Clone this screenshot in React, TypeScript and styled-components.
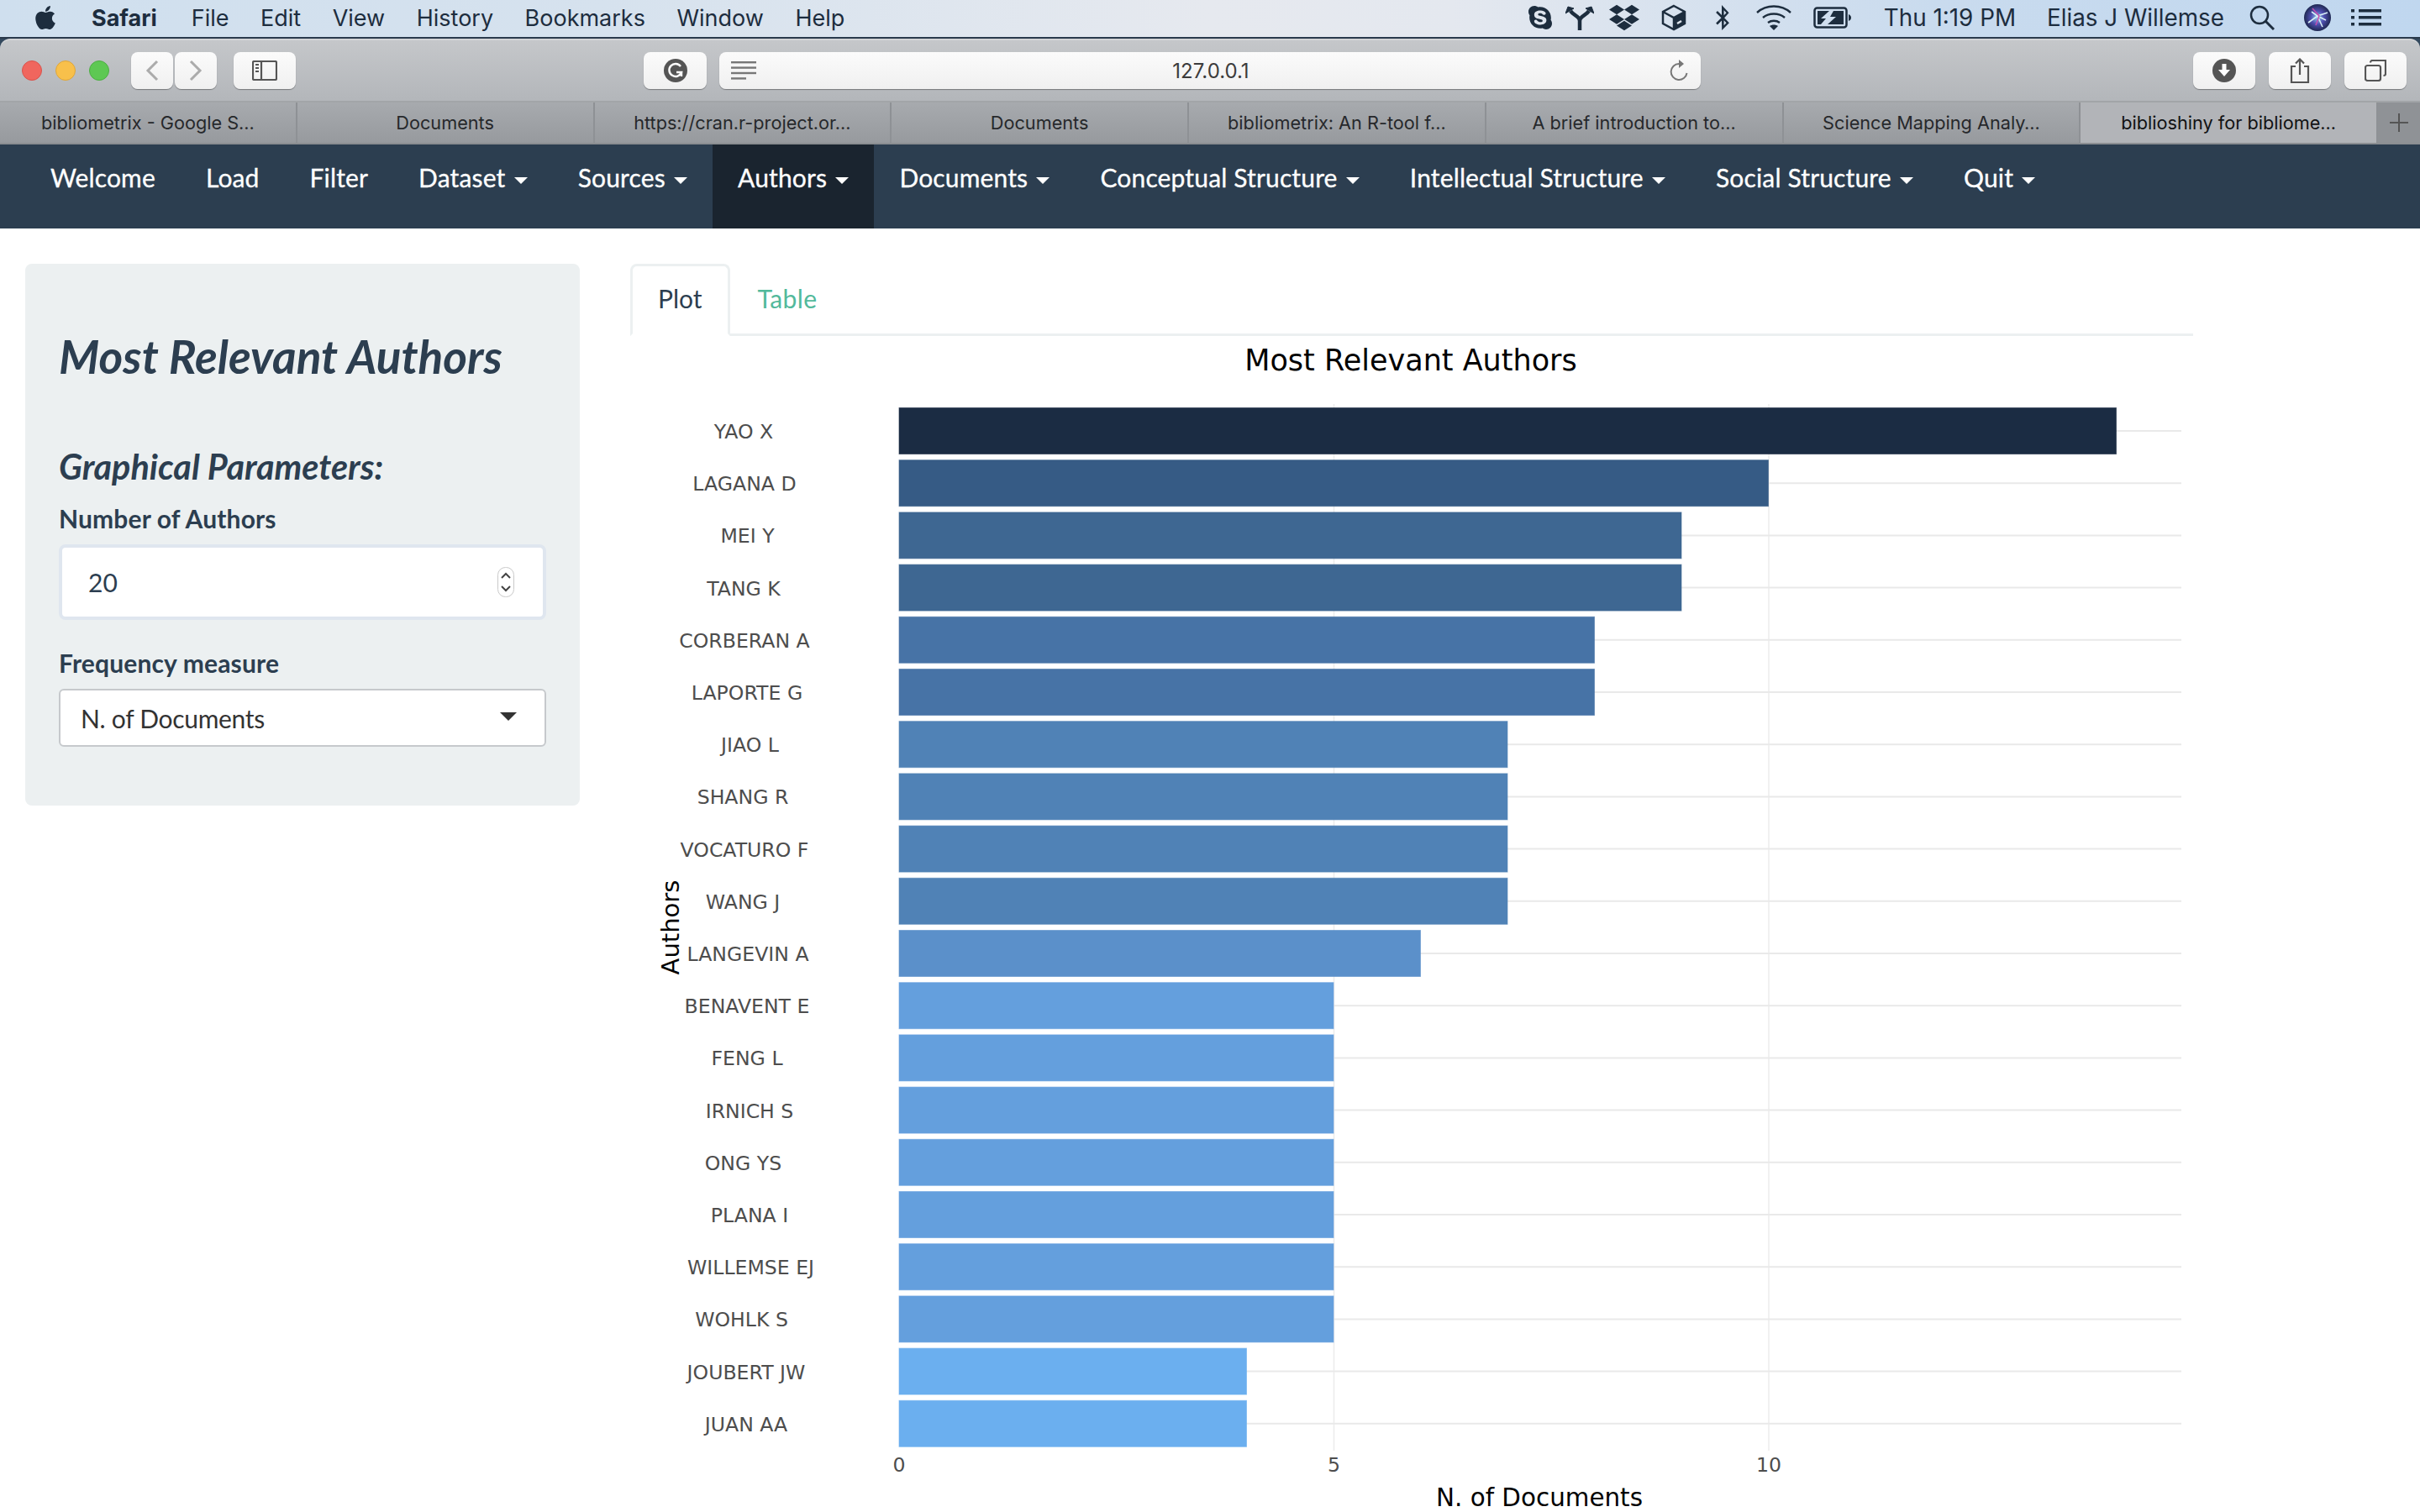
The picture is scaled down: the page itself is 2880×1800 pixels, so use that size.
import React from 'react';
import styled, { createGlobalStyle } from 'styled-components';
import { FaApple, FaSkype, FaDropbox, FaBluetoothB } from 'react-icons/fa';

const GlobalStyle = createGlobalStyle`
  html, body {
    margin: 0;
    padding: 0;
    width: 2880px;
    height: 1800px;
    overflow: hidden;
    background: #ffffff;
  }
  * { box-sizing: border-box; }
`;

const Screen = styled.div`
  width: 2880px;
  height: 1800px;
  overflow: hidden;
  background: #34495e;
  display: flex;
  flex-direction: column;
`;

/* mac menu bar */
const MenuBar = styled.div`
  height: 46px;
  flex: none;
  display: flex;
  align-items: center;
  padding: 0 46px 2px 38px;
  border-bottom: 2px solid #2a3a4c;
  background: linear-gradient(90deg, #cfdfee 0%, #d6e2ee 25%, #e6e9ef 50%, #e4e8ef 60%, #c9dbee 80%, #c0d7ef 100%);
  font-family: Inter, "Liberation Sans", sans-serif;
  font-size: 27px;
  color: #1d2d3e;
`;

const MenuGroup = styled.div<{ $right?: boolean }>`
  display: flex;
  align-items: center;
  margin-left: ${(p) => (p.$right ? 'auto' : '0')};
`;

const MenuItem = styled.span<{ $bold?: boolean; $gap?: number }>`
  font-weight: ${(p) => (p.$bold ? 700 : 400)};
  margin-left: ${(p) => p.$gap ?? 37.5}px;
  white-space: nowrap;
`;

const StatusText = styled(MenuItem)`
  font-size: 27.8px;
`;

const StatusIcon = styled.span<{ $gap: number; $w: number }>`
  display: flex;
  align-items: center;
  justify-content: center;
  width: ${(p) => p.$w}px;
  margin-left: ${(p) => p.$gap}px;
  color: #1d2d3e;
`;

/* safari chrome */
const Toolbar = styled.div`
  height: 76px;
  flex: none;
  display: flex;
  align-items: center;
  padding: 0 16px 0 26px;
  border-radius: 12px 12px 0 0;
  border-top: 2px solid #d3d4d6;
  border-bottom: 2px solid #a2a5a8;
  background: linear-gradient(180deg, #c5c7ca 0%, #b3b6ba 100%);
`;

const TrafficLight = styled.span<{ $color: string; $edge: string }>`
  width: 24px;
  height: 24px;
  border-radius: 50%;
  margin-right: 16px;
  background: ${(p) => p.$color};
  border: 1px solid ${(p) => p.$edge};
`;

const ChromeButton = styled.div<{ $w: number; $gap?: number }>`
  width: ${(p) => p.$w}px;
  height: 44px;
  margin-left: ${(p) => p.$gap ?? 0}px;
  display: flex;
  align-items: center;
  justify-content: center;
  border-radius: 8px;
  background: linear-gradient(180deg, #fbfbfb 0%, #f0f0f0 100%);
  box-shadow: 0 1px 1px rgba(0, 0, 0, 0.35);
`;

const UrlBar = styled.div`
  width: 1168px;
  height: 44px;
  margin-left: 15px;
  display: flex;
  align-items: center;
  justify-content: space-between;
  padding: 0 15px 0 14px;
  border-radius: 8px;
  background: linear-gradient(180deg, #fbfbfb 0%, #f0f0f0 100%);
  box-shadow: 0 1px 1px rgba(0, 0, 0, 0.35);
  font-family: Inter, "Liberation Sans", sans-serif;
  font-size: 24px;
  color: #3c3c3c;
`;

const UrlText = styled.span`
  margin-right: 5px;
`;

const RightTools = styled.div`
  display: flex;
  margin-left: auto;
`;

const TabBar = styled.div`
  height: 50px;
  flex: none;
  display: flex;
  border-bottom: 2px solid #8b8e92;
  font-family: Inter, "Liberation Sans", sans-serif;
  font-size: 21.7px;
  color: #26282b;
  background: linear-gradient(180deg, #a7aaae 0%, #979a9e 100%);
`;

const BrowserTab = styled.div<{ $active?: boolean }>`
  flex: 1;
  display: flex;
  align-items: center;
  justify-content: center;
  white-space: nowrap;
  border-right: 2px solid #8e9195;
  background: ${(p) => (p.$active ? '#b2b4b8' : 'transparent')};
  color: ${(p) => (p.$active ? '#111213' : '#26282b')};
`;

const NewTab = styled.div`
  width: 50px;
  flex: none;
  display: flex;
  align-items: center;
  justify-content: center;
  background: #8f9296;
`;

/* shiny navbar */
const NavBar = styled.nav`
  height: 100px;
  flex: none;
  display: flex;
  background: #2c3e50;
  padding-left: 30px;
  font-family: Lato, "Open Sans", sans-serif;
  font-size: 30px;
  letter-spacing: 0.15px;
`;

const NavLink = styled.a<{ $active?: boolean }>`
  display: block;
  height: 100px;
  padding: 18px 30px 0;
  line-height: 43px;
  white-space: nowrap;
  color: #ffffff;
  -webkit-text-stroke: 0.3px #ffffff;
  background: ${(p) => (p.$active ? '#1a242f' : 'transparent')};
`;

const Caret = styled.span`
  display: inline-block;
  width: 0;
  height: 0;
  margin-left: 10.25px;
  vertical-align: middle;
  border-top: 8px solid #ffffff;
  border-left: 8px solid transparent;
  border-right: 8px solid transparent;
`;

/* page body */
const Page = styled.div`
  flex: 1;
  display: flex;
  align-items: flex-start;
  padding: 42px 0 0 30px;
  background: #ffffff;
  font-family: Lato, "Open Sans", sans-serif;
  color: #2c3e50;
`;

const SidePanel = styled.aside`
  width: 660px;
  flex: none;
  padding: 80px 40px 70px;
  border-radius: 8px;
  background: #ecf0f1;
`;

const PanelTitle = styled.h2`
  margin: 0 0 77px;
  font-size: 55px;
  line-height: 60px;
  font-style: italic;
  font-weight: 700;
`;

const PanelSubtitle = styled.h3`
  margin: 0 0 18px;
  font-size: 41.4px;
  line-height: 48px;
  font-style: italic;
  font-weight: 700;
`;

const FieldLabel = styled.label<{ $top?: number }>`
  display: block;
  margin: ${(p) => p.$top ?? 0}px 0 11px;
  font-size: 30px;
  line-height: 40px;
  font-weight: 700;
  letter-spacing: 0.15px;
`;

const NumberField = styled.div`
  height: 90px;
  display: flex;
  align-items: center;
  justify-content: space-between;
  padding: 0 34px 0 31px;
  border: 4px solid #dfe6ef;
  border-radius: 8px;
  background: #ffffff;
  font-size: 30px;
`;

const SelectField = styled.div`
  height: 69px;
  display: flex;
  align-items: center;
  justify-content: space-between;
  padding: 0 33px 0 24px;
  border: 2px solid #c6c9cc;
  border-radius: 6px;
  background: #ffffff;
  font-size: 30px;
  letter-spacing: -0.3px;
  color: #333333;
`;

const SelectArrow = styled.span`
  width: 0;
  height: 0;
  margin-bottom: 3px;
  border-top: 10px solid #333333;
  border-left: 10px solid transparent;
  border-right: 10px solid transparent;
`;

const Main = styled.main`
  width: 1860px;
  margin-left: 60px;
`;

const TabStrip = styled.div`
  height: 86px;
  display: flex;
  font-size: 30px;
  border-bottom: 3px solid #ecf0f1;
`;

const PageTab = styled.div<{ $active?: boolean }>`
  height: ${(p) => (p.$active ? 86 : 83)}px;
  padding: ${(p) => (p.$active ? '0 30px 4px' : '0 33px 1px')};
  display: flex;
  align-items: center;
  border: ${(p) => (p.$active ? '3px solid #ecf0f1' : '0')};
  border-bottom: ${(p) => (p.$active ? '3px solid #ffffff' : '0')};
  border-radius: 8px 8px 0 0;
  background: ${(p) => (p.$active ? '#ffffff' : 'transparent')};
  letter-spacing: ${(p) => (p.$active ? '0' : '0.4px')};
  color: ${(p) => (p.$active ? '#2c3e50' : '#52b99b')};
`;

const ChartFrame = styled.svg`
  display: block;
  width: 1860px;
  height: 1400px;
  font-family: "DejaVu Sans", Verdana, sans-serif;
`;

const menuItems = ['File', 'Edit', 'View', 'History', 'Bookmarks', 'Window', 'Help'];

const tabs = [
  'bibliometrix - Google S…',
  'Documents',
  'https://cran.r-project.or…',
  'Documents',
  'bibliometrix: An R-tool f…',
  'A brief introduction to…',
  'Science Mapping Analy…',
  'biblioshiny for bibliome…',
];

const navItems: { label: string; menu?: boolean; active?: boolean }[] = [
  { label: 'Welcome' },
  { label: 'Load' },
  { label: 'Filter' },
  { label: 'Dataset', menu: true },
  { label: 'Sources', menu: true },
  { label: 'Authors', menu: true, active: true },
  { label: 'Documents', menu: true },
  { label: 'Conceptual Structure', menu: true },
  { label: 'Intellectual Structure', menu: true },
  { label: 'Social Structure', menu: true },
  { label: 'Quit', menu: true },
];

// name, documents, centre of the label (the labels are not aligned in the plot)
const authors: [string, number, number][] = [
  ['YAO X', 14, 885],
  ['LAGANA D', 10, 886],
  ['MEI Y', 9, 889.5],
  ['TANG K', 9, 885],
  ['CORBERAN A', 8, 886],
  ['LAPORTE G', 8, 889],
  ['JIAO L', 7, 892.5],
  ['SHANG R', 7, 884],
  ['VOCATURO F', 7, 886],
  ['WANG J', 7, 884],
  ['LANGEVIN A', 6, 890],
  ['BENAVENT E', 5, 889],
  ['FENG L', 5, 889],
  ['IRNICH S', 5, 892],
  ['ONG YS', 5, 884.5],
  ['PLANA I', 5, 892],
  ['WILLEMSE EJ', 5, 893.5],
  ['WOHLK S', 5, 882.5],
  ['JOUBERT JW', 4, 888],
  ['JUAN AA', 4, 888],
];

const barColors: Record<number, string> = {
  14: '#1b2c43',
  10: '#365b85',
  9: '#3e6792',
  8: '#4773a6',
  7: '#5082b6',
  6: '#5b90ca',
  5: '#649fdd',
  4: '#6bafef',
};

const X0 = 1070;
const UNIT = 103.5;
const ROW0 = 513;
const PITCH = 62.2;

function Chart() {
  return (
    <ChartFrame viewBox="750 400 1860 1400">
      <text x={1679} y={441} fontSize={35} textAnchor="middle" fill="#000">
        Most Relevant Authors
      </text>
      {[5, 10].map((v) => (
        <line key={v} x1={X0 + v * UNIT} x2={X0 + v * UNIT} y1={481} y2={1727} stroke="#ececec" strokeWidth={1.5} />
      ))}
      {authors.map(([name], i) => (
        <line key={name} x1={X0} x2={2596} y1={ROW0 + i * PITCH} y2={ROW0 + i * PITCH} stroke="#e9e9e9" strokeWidth={2} />
      ))}
      {authors.map(([name, n, cx], i) => {
        const y = ROW0 + i * PITCH;
        return (
          <g key={name}>
            <rect
              x={X0}
              y={y - 27.5}
              width={n * UNIT - 0.5}
              height={55}
              fill={barColors[n]}
              stroke={barColors[n]}
              strokeOpacity={0.6}
            />
            <text x={cx} y={y + 9} fontSize={23.6} textAnchor="middle" fill="#4d4d4d">
              {name}
            </text>
          </g>
        );
      })}
      {[0, 5, 10].map((v) => (
        <text key={v} x={X0 + v * UNIT} y={1752} fontSize={23.6} textAnchor="middle" fill="#4d4d4d">
          {v}
        </text>
      ))}
      <text x={1832} y={1793} fontSize={29.4} textAnchor="middle" fill="#000">
        N. of Documents
      </text>
      <text transform="translate(808 1104) rotate(-90)" fontSize={29} textAnchor="middle" fill="#000">
        Authors
      </text>
    </ChartFrame>
  );
}

function ForkIcon() {
  return (
    <svg width="34" height="30" viewBox="0 0 34 30" fill="none" stroke="#1d2d3e" strokeWidth="4.5">
      <path d="M17 30V19C17 13 10 13 6 7M17 19C17 13 24 13 28 7" />
      <path d="M0 10L3 2L10 4ZM34 10L31 2L24 4Z" fill="#1d2d3e" stroke="#1d2d3e" strokeWidth="1" />
    </svg>
  );
}

function BoxIcon() {
  return (
    <svg width="30" height="32" viewBox="0 0 30 32" fill="none" stroke="#1d2d3e" strokeWidth="2.5">
      <path d="M15 2L28 9V23L15 30L2 23V9Z" />
      <path d="M2 9L15 16L28 9M15 16V30" />
      <path d="M15 16L28 9V23L15 30Z" fill="#1d2d3e" stroke="none" />
      <path d="M19 23L24 20" stroke="#dfe6ee" />
    </svg>
  );
}

function WifiIcon() {
  return (
    <svg width="42" height="30" viewBox="0 0 42 30" fill="none" stroke="#1d2d3e" strokeWidth="2.4">
      <path d="M1 9C12 -1 30 -1 41 9M8 15C15 9 27 9 34 15M14 21C18 18 24 18 28 21" />
      <path d="M21 30L16 25C19 23 23 23 26 25Z" fill="#1d2d3e" stroke="none" />
    </svg>
  );
}

function BatteryIcon() {
  return (
    <svg width="46" height="26" viewBox="0 0 46 26" fill="none">
      <rect x="1.5" y="1.5" width="38" height="23" rx="3" stroke="#1d2d3e" strokeWidth="2.5" />
      <path d="M5 5H19L9 14H15L9 21H5ZM24 5H36V21H17L27 12H20Z" fill="#1d2d3e" />
      <path d="M42 9C44 10 45 11 45 13C45 15 44 16 42 17Z" fill="#1d2d3e" />
    </svg>
  );
}

function SearchIcon() {
  return (
    <svg width="30" height="30" viewBox="0 0 30 30" fill="none" stroke="#1d2d3e" strokeWidth="2.5">
      <circle cx="12" cy="12" r="10" />
      <path d="M19 19L29 29" strokeWidth="3" />
    </svg>
  );
}

function SiriIcon() {
  return (
    <svg width="32" height="32" viewBox="0 0 32 32">
      <defs>
        <radialGradient id="siri" cx="50%" cy="50%" r="55%">
          <stop offset="0%" stopColor="#8fd0ee" />
          <stop offset="45%" stopColor="#4f4fb0" />
          <stop offset="100%" stopColor="#14203f" />
        </radialGradient>
      </defs>
      <circle cx="16" cy="16" r="16" fill="url(#siri)" />
      <path d="M5 22L16 14L28 10M9 9L16 14L22 27M16 14L26 19" stroke="#d8f0f6" strokeWidth="1.6" fill="none" />
      <path d="M10 5L18 14L14 25" stroke="#c04fb0" strokeWidth="1.6" fill="none" />
    </svg>
  );
}

function ListIcon() {
  return (
    <svg width="36" height="20" viewBox="0 0 36 20" fill="#1d2d3e">
      <rect x="0" y="0" width="4" height="3.5" />
      <rect x="0" y="8" width="4" height="3.5" />
      <rect x="0" y="16" width="4" height="3.5" />
      <rect x="9" y="0" width="27" height="3.5" />
      <rect x="9" y="8" width="27" height="3.5" />
      <rect x="9" y="16" width="27" height="3.5" />
    </svg>
  );
}

function Chevron({ dir }: { dir: 'left' | 'right' }) {
  return (
    <svg width="16" height="26" viewBox="0 0 16 26" fill="none" stroke="#ababab" strokeWidth="3">
      <path d={dir === 'left' ? 'M14 2L3 13L14 24' : 'M2 2L13 13L2 24'} />
    </svg>
  );
}

function SidebarIcon() {
  return (
    <svg width="30" height="24" viewBox="0 0 30 24" fill="none" stroke="#555" strokeWidth="2.2">
      <rect x="1" y="1" width="28" height="22" rx="1.5" />
      <path d="M11 1V23" />
      <path d="M4 5H8M4 9H8M4 13H8" strokeWidth="2" />
    </svg>
  );
}

function GrammarlyIcon() {
  return (
    <svg width="28" height="28" viewBox="0 0 28 28" fill="none">
      <circle cx="14" cy="14" r="14" fill="#555" />
      <path d="M20 9A7.5 7.5 0 1 0 21 16H15" stroke="#fff" strokeWidth="2.4" />
      <path d="M21 16L21 21" stroke="#fff" strokeWidth="2.4" />
    </svg>
  );
}

function ReaderIcon() {
  return (
    <svg width="30" height="22" viewBox="0 0 30 22" fill="#777">
      <rect y="0" width="30" height="2.4" />
      <rect y="6.4" width="30" height="2.4" />
      <rect y="12.8" width="30" height="2.4" />
      <rect y="19.2" width="18" height="2.4" />
    </svg>
  );
}

function ReloadIcon() {
  return (
    <svg width="22" height="28" viewBox="0 0 22 28" fill="none" stroke="#777" strokeWidth="2">
      <path d="M11 6A9.5 9.5 0 1 0 20.5 17" />
      <path d="M11 1L17 6L11 11Z" fill="#777" stroke="none" />
    </svg>
  );
}

function DownloadIcon() {
  return (
    <svg width="28" height="28" viewBox="0 0 28 28">
      <circle cx="14" cy="14" r="14" fill="#555" />
      <path d="M11.5 6H16.5V13H21L14 21L7 13H11.5Z" fill="#fff" />
    </svg>
  );
}

function ShareIcon() {
  return (
    <svg width="24" height="30" viewBox="0 0 24 30" fill="none" stroke="#555" strokeWidth="2.2">
      <path d="M7 10H2V29H22V10H17" />
      <path d="M12 20V2M7 6.5L12 1.5L17 6.5" />
    </svg>
  );
}

function TabsIcon() {
  return (
    <svg width="26" height="26" viewBox="0 0 26 26" fill="none" stroke="#555" strokeWidth="2.2">
      <rect x="1" y="7" width="18" height="18" rx="2.5" />
      <path d="M7 3.5C7 2 8 1 9.5 1H25V17C25 18.5 24 19 22.5 19" />
    </svg>
  );
}

function Spinner() {
  return (
    <svg width="20" height="36" viewBox="0 0 20 36" fill="none">
      <rect x="0.5" y="0.5" width="19" height="35" rx="9" fill="#fff" stroke="#c9c9c9" />
      <path d="M5 13L10 8L15 13M5 23L10 28L15 23" stroke="#444" strokeWidth="2" />
    </svg>
  );
}

export default function App() {
  return (
    <Screen>
      <GlobalStyle />
      <MenuBar>
        <MenuGroup>
          <FaApple size={32} color="#1d2d3e" />
          <MenuItem $bold $gap={39}>Safari</MenuItem>
          {menuItems.map((m, i) => (
            <MenuItem key={m} $gap={i === 0 ? 41 : undefined}>{m}</MenuItem>
          ))}
        </MenuGroup>
        <MenuGroup $right>
          <StatusIcon $gap={0} $w={32}><FaSkype size={32} /></StatusIcon>
          <StatusIcon $gap={14} $w={34}><ForkIcon /></StatusIcon>
          <StatusIcon $gap={17} $w={38}><FaDropbox size={36} /></StatusIcon>
          <StatusIcon $gap={25} $w={30}><BoxIcon /></StatusIcon>
          <StatusIcon $gap={33} $w={20}><FaBluetoothB size={30} /></StatusIcon>
          <StatusIcon $gap={30} $w={42}><WifiIcon /></StatusIcon>
          <StatusIcon $gap={26} $w={46}><BatteryIcon /></StatusIcon>
          <StatusText $gap={38}>Thu 1:19 PM</StatusText>
          <StatusText $gap={37}>Elias J Willemse</StatusText>
          <StatusIcon $gap={30} $w={30}><SearchIcon /></StatusIcon>
          <StatusIcon $gap={35} $w={32}><SiriIcon /></StatusIcon>
          <StatusIcon $gap={24} $w={36}><ListIcon /></StatusIcon>
        </MenuGroup>
      </MenuBar>

      <Toolbar>
        <TrafficLight $color="#f0665e" $edge="#d9534c" />
        <TrafficLight $color="#f8c04b" $edge="#dea63a" />
        <TrafficLight $color="#5ec853" $edge="#4dae43" />
        <ChromeButton $w={50} $gap={10}><Chevron dir="left" /></ChromeButton>
        <ChromeButton $w={50} $gap={2}><Chevron dir="right" /></ChromeButton>
        <ChromeButton $w={74} $gap={20}><SidebarIcon /></ChromeButton>
        <ChromeButton $w={75} $gap={414}><GrammarlyIcon /></ChromeButton>
        <UrlBar>
          <ReaderIcon />
          <UrlText>127.0.0.1</UrlText>
          <ReloadIcon />
        </UrlBar>
        <RightTools>
          <ChromeButton $w={74}><DownloadIcon /></ChromeButton>
          <ChromeButton $w={74} $gap={16}><ShareIcon /></ChromeButton>
          <ChromeButton $w={74} $gap={16}><TabsIcon /></ChromeButton>
        </RightTools>
      </Toolbar>

      <TabBar>
        {tabs.map((t, i) => (
          <BrowserTab key={i} $active={i === tabs.length - 1}>{t}</BrowserTab>
        ))}
        <NewTab>
          <svg width="22" height="22" viewBox="0 0 22 22" stroke="#555" strokeWidth="2">
            <path d="M11 0V22M0 11H22" />
          </svg>
        </NewTab>
      </TabBar>

      <NavBar>
        {navItems.map((n) => (
          <NavLink key={n.label} $active={n.active}>
            {n.label}
            {n.menu && <Caret />}
          </NavLink>
        ))}
      </NavBar>

      <Page>
        <SidePanel>
          <PanelTitle>Most Relevant Authors</PanelTitle>
          <PanelSubtitle>Graphical Parameters:</PanelSubtitle>
          <FieldLabel>Number of Authors</FieldLabel>
          <NumberField>
            <span>20</span>
            <Spinner />
          </NumberField>
          <FieldLabel $top={31}>Frequency measure</FieldLabel>
          <SelectField>
            <span>N. of Documents</span>
            <SelectArrow />
          </SelectField>
        </SidePanel>
        <Main>
          <TabStrip>
            <PageTab $active>Plot</PageTab>
            <PageTab>Table</PageTab>
          </TabStrip>
          <Chart />
        </Main>
      </Page>
    </Screen>
  );
}
